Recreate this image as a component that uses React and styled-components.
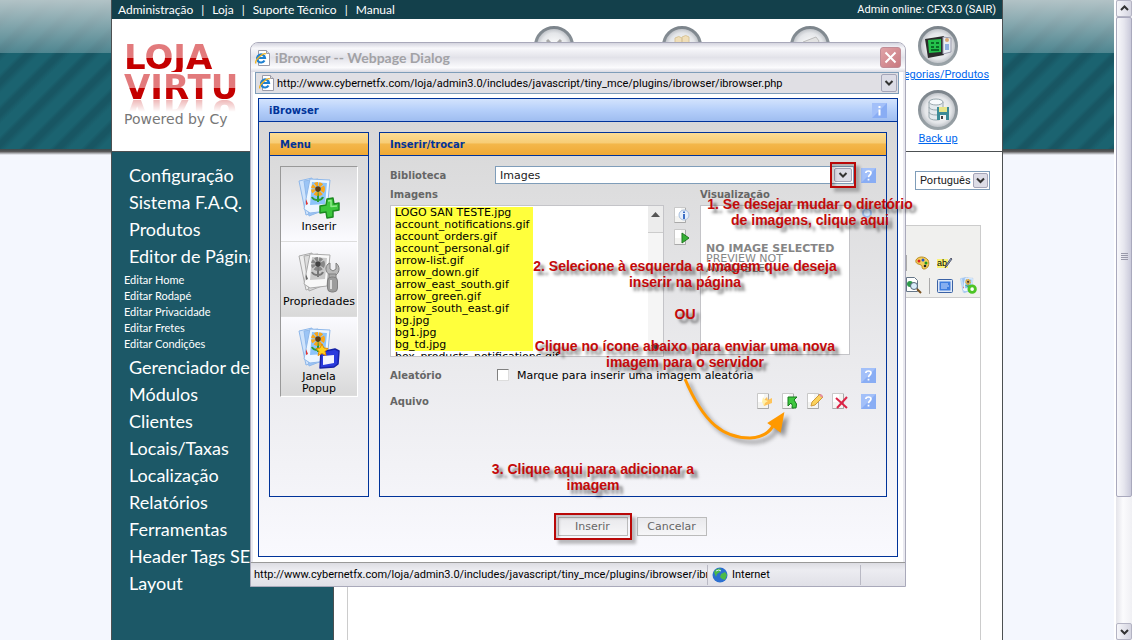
import React from 'react';
import styled, { createGlobalStyle, css } from 'styled-components';

const trebuchet = '"Trebuchet MS", Lato, sans-serif';
const tahoma = 'Tahoma, Roboto, sans-serif';
const verdana = 'Verdana, "DejaVu Sans", sans-serif';

const GlobalStyle = createGlobalStyle`
  * {
    box-sizing: border-box;
  }

  body {
    margin: 0;
    overflow: hidden;
    font-family: ${tahoma};
    font-size: 11px;
    color: #000;
  }

  ul, p, h1, h2, h3 {
    margin: 0;
    padding: 0;
    list-style: none;
  }

  button, select, input {
    font: inherit;
    margin: 0;
  }

  svg {
    display: block;
  }
`;

const Window = styled.div`
  display: flex;
  height: 100vh;
  position: relative;
`;

const Page = styled.div`
  flex: 1;
  overflow: hidden;
  background:
    linear-gradient(rgba(186, 200, 203, .95), rgba(130, 168, 176, .5)) 0 0 / 100% 53px no-repeat,
    linear-gradient(#3f4a4d, #555 40%, #f4f7fe) 0 149px / 100% 6px no-repeat,
    linear-gradient(#f4f7fe, #f4f7fe) 0 155px / 100% 100% no-repeat,
    repeating-linear-gradient(135deg, #1b6370 0 8px, #185663 12px 16px, #1b6370 22px);
`;

const Shell = styled.div`
  max-width: 892px;
  min-height: 100%;
  margin: 0 auto;
  display: flex;
  flex-direction: column;
  background: #fff;
  border: solid #4c5052;
  border-width: 0 1px;
`;

const TopBar = styled.header`
  display: flex;
  justify-content: space-between;
  align-items: center;
  height: 19px;
  padding: 0 6px;
  background: #13404b;
  color: #fff;
`;

const TopNav = styled.nav`
  display: flex;
  gap: 8px;
  font: 12px ${trebuchet};

  a {
    color: #fff;
    text-decoration: none;
  }
`;

const Banner = styled.div`
  display: flex;
  justify-content: space-between;
  height: 133px;
  border-bottom: 1px solid #4c5052;
`;

const Brand = styled.div`
  padding: 23px 0 0 12px;
`;

const BrandWord = styled.div`
  height: 30px;
  font: bold 34px/30px "DejaVu Sans", sans-serif;
  color: transparent;
  background: linear-gradient(#e27a7c 52%, #c40000 52%);
  background-clip: text;
  -webkit-box-reflect: ${p => p.$mirror ? 'below -5px linear-gradient(transparent 50%, rgba(0, 0, 0, .35))' : 'none'};
`;

const BrandNote = styled.p`
  margin-top: 9px;
  font: 14px/16px "DejaVu Sans", sans-serif;
  color: #777;
`;

const Shortcuts = styled.div`
  display: grid;
  grid-template-columns: repeat(4, 128px);
  grid-template-rows: 64px 64px;
  justify-items: center;
  padding-top: 6px;
`;

const Shortcut = styled.a`
  grid-column: ${p => p.$col};
  display: flex;
  flex-direction: column;
  align-items: center;
  font: 11px/15px ${tahoma};
  color: #06e;
`;

const Columns = styled.div`
  flex: 1;
  display: flex;
`;

const Sidebar = styled.nav`
  flex: 0 0 222px;
  padding: 10px 0 0 12px;
  background: #1c5867;
  border-right: 1px solid #4c5052;

  a {
    display: block;
    color: #fff;
    text-decoration: none;
    white-space: nowrap;
  }
`;

const SideLink = styled.a`
  padding-left: 5px;
  font: 18px/27px ${trebuchet};
`;

const SideSubLink = styled.a`
  font: 11px/16px ${trebuchet};
`;

const SideGroup = styled.div`
  padding: 2px 0;
`;

const Main = styled.main`
  flex: 1;
  display: flex;
  flex-direction: column;
  padding: 19px 12px 0 13px;
`;

const SelectBox = styled.div`
  position: relative;
  display: flex;
  border: 1px solid #7f9db9;
  background: #fff;

  select {
    flex: 1;
    width: 100%;
    height: 17px;
    padding: 0 16px 0 4px;
    border: 0;
    outline: 0;
    appearance: none;
    background: transparent;
    color: #222;
  }

  svg {
    position: absolute;
    right: 1px;
    top: 1px;
    pointer-events: none;
  }
`;

const LanguageSelect = styled(SelectBox)`
  align-self: flex-end;
  width: 75px;
`;

const Editor = styled.section`
  flex: 1;
  margin: 35px 9px 0 0;
  border: solid #ccc;
  border-width: 1px 1px 0;
`;

const Toolbar = styled.div`
  height: 72px;
  padding-top: 25px;
  background: #f0f0ee;
  border-bottom: 1px solid #ccc;
`;

const ToolRow = styled.div`
  display: flex;
  justify-content: flex-end;
  align-items: center;
  gap: 7px;
  height: 23px;
  padding-right: ${p => p.$end}px;
`;

const Rule = styled.span`
  width: 1px;
  height: 16px;
  background: #aaa;
`;

const Scrollbar = styled.div`
  flex: 0 0 18px;
  display: flex;
  flex-direction: column;
  padding-left: 2px;
  background: linear-gradient(90deg, #fff 2px, #e4e4ea 2px, #fbfbfd 9px, #f0f0f4);
`;

const ScrollEnd = styled.button`
  height: 17px;
  padding: 0 0 0 3px;
  border: 1px solid #b4b4c4;
  border-radius: 2px;
  background: linear-gradient(90deg, #f6f6fa, #d4d4e0);
`;

const ScrollThumb = styled.div`
  flex: 19;
  display: flex;
  align-items: center;
  justify-content: center;
  border: 1px solid #a9a9bd;
  border-radius: 2px;
  background: linear-gradient(90deg, #f8f8fb, #e6e6ee 50%, #c9c9da);
`;

const ScrollSpace = styled.div`
  flex: 5;
`;

const Dialog = styled.section`
  position: absolute;
  left: 250px;
  top: 42px;
  width: 656px;
  border: 1px solid #a9a9ba;
  border-radius: 8px 8px 0 0;
  background: #fff;
  box-shadow: inset 0 0 0 2px #e9e9f0;
`;

const TitleBar = styled.div`
  display: flex;
  align-items: center;
  gap: 4px;
  height: 29px;
  padding: 0 4px;
  border-radius: 7px 7px 0 0;
  background: linear-gradient(#d4d4de, #f8f8fb 18%, #e2e2e9 50%, #fbfbfd 85%, #d9d9e2);

  h1 {
    flex: 1;
    font: bold 14px ${trebuchet};
    color: #a2a2a6;
  }
`;

const CloseButton = styled.button`
  width: 21px;
  height: 21px;
  padding: 0;
  border: 1px solid #c08c96;
  border-radius: 3px;
  background: linear-gradient(135deg, #e0a4a8, #c9797f);
`;

const AddressBar = styled.div`
  display: flex;
  align-items: center;
  height: 22px;
  margin: 0 6px 0 4px;
  padding: 1px 1px 1px 3px;
  border: 1px solid #7f9db9;
  background: #e0dfe4;

  input {
    flex: 1;
    margin-left: 2px;
    padding: 0;
    border: 0;
    outline: 0;
    background: transparent;
    font: 11px ${tahoma};
    color: #000;
  }
`;

const Frame = styled.div`
  margin: 4px 7px 5px;
  border: 1px solid #039;
  background: linear-gradient(#d6d6d6, #e4e4e6 40%, #f9f9fe);
`;

const panelTitle = css`
  display: flex;
  align-items: center;
  justify-content: space-between;
  height: 23px;
  padding: 0 10px;
  border-bottom: 1px solid #039;
  font: bold 10px ${verdana};
  color: #039;
`;

const FrameTitle = styled.h2`
  ${panelTitle}
  background: linear-gradient(#d3e3fd, #b5cffa 50%, #9fbdf0);
`;

const PanelTitle = styled.h3`
  ${panelTitle}
  background: linear-gradient(#fbdc93, #f7cd76 45%, #f3b74b 50%, #f0a935);
`;

const Panels = styled.div`
  display: flex;
  align-items: stretch;
  gap: 10px;
  min-height: 375px;
  padding: 10px 10px 0;
`;

const Panel = styled.div`
  flex: ${p => p.$width ? `0 0 ${p.$width}px` : 1};
  border: 1px solid #039;
`;

const MenuList = styled.div`
  display: flex;
  flex-direction: column;
  margin: 10px;
  border: 1px solid #999;
  border-right-color: #fff;
  border-bottom-color: #fff;
`;

const MenuButton = styled.button`
  display: flex;
  flex-direction: column;
  align-items: center;
  gap: 2px;
  min-height: 75px;
  padding: 10px 0 0;
  border: 0;
  border-bottom: 1px solid #ddd;
  background: ${p => p.$pressed
    ? 'linear-gradient(#dcdcde, #fbfbff)'
    : 'linear-gradient(#fbfbff, #d9d9d9)'};
  font: 11px/12px ${verdana};
`;

const Form = styled.div`
  padding: 10px 10px 0;
  font: bold 10px ${verdana};
  color: #666;
`;

const Row = styled.div`
  display: grid;
  grid-template-columns: 105px 1fr 22px;
  align-items: center;
  height: 18px;
  margin-bottom: 8px;

  & > :last-child {
    justify-self: end;
  }
`;

const LibraryRow = styled(Row)`
  margin-bottom: 4px;
`;

const LibrarySelect = styled(SelectBox)`
  font: 11px ${verdana};

  select {
    height: 16px;
  }
`;

const Browser = styled.div`
  display: grid;
  grid-template-columns: 274px 16px 150px 1fr;
  column-gap: 10px;
  margin-bottom: 9px;

  h4 {
    margin: 0;
    height: 17px;
    font: bold 10px/14px ${verdana};
  }
`;

const FileBox = styled.div`
  display: flex;
  height: 152px;
  border: 1px solid #c4c4c8;
  background: #fff;
  font: 11px/12px ${verdana};
  color: #000;
`;

const FileList = styled.ul`
  flex: 1;
  overflow: hidden;
  padding: 1px 0 0 4px;
  white-space: nowrap;
`;

const File = styled.li`
  width: 138px;
  background: ${p => p.$marked ? '#ffff3c' : 'transparent'};
`;

const FileScroll = styled.div`
  display: flex;
  flex-direction: column;
  justify-content: space-between;
  width: 15px;
  background: #f5f5f5;

  div {
    height: 27px;
    background: #ececec;
    border-bottom: 1px solid #ccc;
  }

  svg {
    margin: 4px 3px;
  }
`;

const Tools = styled.div`
  display: flex;
  flex-direction: column;
  gap: 6px;
  padding-top: 2px;
  align-items: ${p => p.$end ? 'flex-end' : 'flex-start'};
`;

const IconButton = styled.button`
  padding: 0;
  border: 0;
  background: none;
`;

const Preview = styled.div`
  height: 150px;
  padding: 38px 0 0 5px;
  border: 1px solid #c4c4c8;
  background: #fff;
  font: 11px/10px ${verdana};
  color: #858585;
  white-space: nowrap;
`;

const CheckLabel = styled.label`
  display: flex;
  align-items: center;
  gap: 8px;
  padding-left: 2px;
  font: 11px ${verdana};
  color: #000;

  input {
    width: 12px;
    height: 12px;
    appearance: none;
    border: 1px solid #808080;
    border-right-color: #ddd;
    border-bottom-color: #ddd;
    background: #fff;
  }
`;

const FileActions = styled.div`
  display: flex;
  justify-content: flex-end;
  gap: 9px;
  padding-right: 6px;
`;

const Footer = styled.div`
  display: flex;
  justify-content: center;
  gap: 9px;
  padding: 20px 0 20px 108px;
`;

const FormButton = styled.button`
  width: 70px;
  height: 19px;
  padding: 0;
  border: 1px solid #bbb;
  background: linear-gradient(#e9e9ec, #f6f6f8);
  font: 11px ${verdana};
  color: #666;
`;

const StatusBar = styled.div`
  display: flex;
  align-items: center;
  height: 24px;
  padding: 0 3px;
  border-top: 1px solid #999;
  background: linear-gradient(#dcdce2, #ececf1 30%, #e0e0e7);
  font: 11px ${tahoma};

  p {
    flex: 1;
    overflow: hidden;
    white-space: nowrap;
  }
`;

const Zone = styled.div`
  display: flex;
  align-items: center;
  gap: 4px;
  width: 154px;
  height: 20px;
  padding-left: 4px;
  border: solid #b9b9c4;
  border-width: 0 1px;
`;

const StatusEnd = styled.div`
  width: 41px;
`;

const Marked = styled.div`
  position: relative;
  display: grid;
`;

const Ring = styled.span`
  position: absolute;
  right: ${p => p.$x}px;
  top: -4px;
  width: ${p => p.$w}px;
  height: ${p => p.$h}px;
  border: 2px solid #b90808;
  box-shadow: 4px 4px 3px rgba(0, 0, 0, .25), inset 3px 3px 3px rgba(0, 0, 0, .2);
  pointer-events: none;
`;

const Callout = styled.p`
  position: absolute;
  left: ${p => p.$left}px;
  top: ${p => p.$top}px;
  width: 320px;
  font: bold 14px/16px Arial, "Liberation Sans", sans-serif;
  text-align: center;
  color: #c40a0a;
  text-shadow: 4px 4px 3px rgba(0, 0, 0, .5);
  pointer-events: none;
`;

const CalloutArrow = styled.svg`
  position: absolute;
  left: 429px;
  top: 333px;
  filter: drop-shadow(4px 4px 2px rgba(0, 0, 0, .4));
  pointer-events: none;
`;

const Chevron = ({ width = 15, height = 15 }) => (
  <svg width={width} height={height} viewBox={`0 0 ${width} ${height}`}>
    <rect x=".5" y=".5" width={width - 1} height={height - 1} rx="1.5" fill="#dcdce6" stroke="#a5a5b8" />
    <path d={`M${width / 2 - 3.5} ${height / 2 - 2}l3.500 3.500 3.500-3.500`} fill="none" stroke="#333" strokeWidth="2" />
  </svg>
);

const HelpIcon = ({ mark = '?' }) => (
  <svg width="15" height="15" viewBox="0 0 15 15">
    <rect width="15" height="15" fill="#89adf4" />
    <path d="M0 15L15 0H0z" fill="#a3c0f9" />
    {mark === '?'
      ? <path d="M4.800 5C4.800 2.300 10 2.300 10 5C10 7 7.500 7 7.500 9.300M7.500 10.800v1.700" fill="none" stroke="#fff" strokeWidth="1.700" />
      : <path d="M7.500 3v2M7.500 6.500v6" fill="none" stroke="#fff" strokeWidth="2" />}
  </svg>
);

const BrowserIcon = () => (
  <svg width="16" height="16" viewBox="0 0 16 16">
    <path d="M3.500.5h8l3 3v12h-11z" fill="#fff" stroke="#9a9aa8" />
    <path d="M11.500.5v3h3" fill="#ddd" stroke="#9a9aa8" />
    <path d="M9.500 10.500A4 4 0 1 1 10 8H3" fill="none" stroke="#1d7fd0" strokeWidth="2.200" />
    <path d="M1 13.500C-1 10 9 2 11 4" fill="none" stroke="#efb325" strokeWidth="1.400" />
  </svg>
);

const GlobeIcon = () => (
  <svg width="16" height="16" viewBox="0 0 16 16">
    <circle cx="8" cy="8" r="7.500" fill="#2c6fd0" />
    <path d="M2 5c2-4 6-4 7-3l-1 3-3 2-1 3zM9 7l4-2 2 3-2 5-3-1-2-2z" fill="#4dbb48" />
    <path d="M4 4q3-2 5 0" fill="none" stroke="#d7efff" />
  </svg>
);

const Photo = ({ gray }) => (
  <g stroke={gray ? '#aaa' : '#8fb8ea'}>
    <path d="M1 4l13-3 5 33-11 4z" fill={gray ? '#eee' : '#cfe3fb'} />
    <path d="M6 4l14-2 4 32-13 5z" fill={gray ? '#ddd' : '#9cc5f6'} />
    <path d="M12 2l20 1-3 31-17 2-6-4z" fill={gray ? '#f8f8f8' : '#edf6ff'} />
    <path d="M14 5l15 1-2 21-15 1z" fill={gray ? '#c9c9c9' : '#8cc4fa'} stroke="none" />
    <path d="M20 13v12M20 23q-5 0-6-3M20 23q4 0 5-3" fill="none" stroke={gray ? '#777' : '#2a9b35'} strokeWidth="2" />
    <circle cx="20" cy="12" r="5" fill="none" stroke={gray ? '#888' : '#f9a61a'} strokeWidth="4" strokeDasharray="3 1" />
    <circle cx="20" cy="12" r="2.800" fill={gray ? '#444' : '#5b3a16'} stroke="none" />
    <path d="M8 22l2 5-2 1z" fill={gray ? '#666' : '#d33'} stroke="none" />
  </g>
);

const MenuIcon = ({ kind }) => (
  <svg width="42" height="42" viewBox="0 0 42 42">
    <Photo gray={kind === 'props'} />
    {kind === 'insert' && (
      <g strokeLinejoin="round">
        <path d="M29 22l6-1 1 6 5-1v7l-6 1v6l-6 1-1-6-6 1v-7l6-1z" fill="#3cc63c" stroke="#1b8a20" strokeWidth="1.500" />
        <path d="M30 24l3-.500v6l6-.500" fill="none" stroke="#90ec8a" strokeWidth="1.500" />
      </g>
    )}
    {kind === 'props' && (
      <g>
        <path d="M30 12l2-1v6l3 2 3-2v-6c4 3 4 9 0 12h-6c-5-3-5-8-2-11z" fill="#b9b9b9" stroke="#808080" />
        <path d="M31 22h7v4h-7z" fill="#aaa" stroke="#808080" />
        <rect x="29.500" y="25" width="10" height="15" rx="4" fill="#9c9c9c" stroke="#808080" />
        <path d="M33 28v9" stroke="#ddd" strokeWidth="2" />
      </g>
    )}
    {kind === 'popup' && (
      <g strokeLinejoin="round">
        <path d="M23 25l14-3 4 2-1 13-4 3-14 1z" fill="#2a3bdc" stroke="#1622a6" strokeWidth="1.500" />
        <path d="M25 29l11-1v8l-11 2z" fill="#f2f4ff" />
        <path d="M24 17l2 4 4 .5-3 3 1 4-4-2-4 2 1-4-3-3 4-.5z" fill="#ffd21f" stroke="#e58a00" />
      </g>
    )}
  </svg>
);

const Sheet = ({ children, label }) => (
  <IconButton aria-label={label}>
    <svg width="16" height="16" viewBox="0 0 16 16">
      <path d="M.5.500h11v15H.5z" fill="#f4f4f2" stroke="#c9c9c9" />
      <path d="M1 1h6v8H1z" fill="#fff" />
      <path d="M.5 15.500h11V1" fill="none" stroke="#a9a9a9" />
      {children}
    </svg>
  </IconButton>
);

const RoundIcon = ({ kind }) => (
  <svg width="42" height="42" viewBox="0 0 42 42">
    <defs>
      <linearGradient id="rim" x1="0" y1="0" x2="0" y2="1">
        <stop offset="0" stopColor="#7d858c" />
        <stop offset="1" stopColor="#9aa3a8" />
      </linearGradient>
      <radialGradient id="dish" cx=".5" cy=".5">
        <stop offset="0" stopColor="#fff" />
        <stop offset=".7" stopColor="#e4e6e9" />
        <stop offset="1" stopColor="#b4b8be" />
      </radialGradient>
    </defs>
    <circle cx="21" cy="21" r="18.500" fill="url(#dish)" stroke="url(#rim)" strokeWidth="3" />
    {kind === 'tools' && <path d="M14 15l14 14M28 15L16 27" stroke="#a9a9a9" strokeWidth="3" />}
    {kind === 'users' && <path d="M14 13q4-3 7 0v9h-7zM21 12q4-3 7 0v10h-7z" fill="#f0deb8" stroke="#d8c59a" />}
    {kind === 'box' && <path d="M14 17l13-5 3 4-4 8H15z" fill="#e2e2e2" stroke="#bbb" />}
    {kind === 'products' && (
      <g>
        <path d="M8 14l19-3v19l-16 3z" fill="#2b2b2b" />
        <path d="M11 15l13-1v13l-12 1z" fill="#24c04b" />
        <path d="M14 18h3m2 0h3M14 22h3m2 0h3M14 25h8" stroke="#0a6b26" strokeWidth="2" />
        <path d="M26 12l8 1v14l-8 2z" fill="#e9eef4" stroke="#99a" />
        <circle cx="30" cy="15" r="2" fill="#dba774" />
        <path d="M28 19h4v6h-4z" fill="#8faee0" />
      </g>
    )}
    {kind === 'backup' && (
      <g>
        <path d="M12 13v15c0 4 14 4 14 0V13z" fill="#e4eaee" stroke="#9aa8ae" />
        <ellipse cx="19" cy="13" rx="7" ry="3" fill="#f7fafc" stroke="#9aa8ae" />
        <path d="M12 18c0 4 14 4 14 0M12 23c0 4 14 4 14 0" fill="none" stroke="#9aa8ae" />
        <rect x="20" y="18" width="12" height="13" fill="#3d8b97" />
        <rect x="22" y="18" width="8" height="5" fill="#e8e58a" />
        <rect x="23" y="26" width="6" height="5" fill="#f4f4f4" />
        <path d="M24 27h2v3h-2z" fill="#444" />
      </g>
    )}
  </svg>
);

const files = [
  'LOGO SAN TESTE.jpg', 'account_notifications.gif', 'account_orders.gif', 'account_personal.gif',
  'arrow-list.gif', 'arrow_down.gif', 'arrow_east_south.gif', 'arrow_green.gif',
  'arrow_south_east.gif', 'bg.jpg', 'bg1.jpg', 'bg_td.jpg',
];

const topLinks = ['Administração', 'Loja', 'Suporte Técnico', 'Manual'];
const mainLinks = ['Configuração', 'Sistema F.A.Q.', 'Produtos', 'Editor de Páginas'];
const pageLinks = ['Editar Home', 'Editar Rodapé', 'Editar Privacidade', 'Editar Fretes', 'Editar Condições'];
const moreLinks = [
  'Gerenciador de', 'Módulos', 'Clientes', 'Locais/Taxas', 'Localização',
  'Relatórios', 'Ferramentas', 'Header Tags SEO', 'Layout',
];

const address = 'http://www.cybernetfx.com/loja/admin3.0/includes/javascript/tiny_mce/plugins/ibrowser/ibrowser.php';

const AdminPage = () => (
  <Page>
    <Shell>
      <TopBar>
        <TopNav>
          {topLinks.map((name, i) => (
            <React.Fragment key={name}>
              {i > 0 && <span>|</span>}
              <a href="#top">{name}</a>
            </React.Fragment>
          ))}
        </TopNav>
        <span>Admin online: CFX3.0 (SAIR)</span>
      </TopBar>
      <Banner>
        <Brand>
          <BrandWord>LOJA</BrandWord>
          <BrandWord $mirror>VIRTU</BrandWord>
          <BrandNote>Powered by Cy</BrandNote>
        </Brand>
        <Shortcuts>
          <Shortcut $col={1} href="#tools" aria-label="Ferramentas"><RoundIcon kind="tools" /></Shortcut>
          <Shortcut $col={2} href="#users" aria-label="Clientes"><RoundIcon kind="users" /></Shortcut>
          <Shortcut $col={3} href="#orders" aria-label="Pedidos"><RoundIcon kind="box" /></Shortcut>
          <Shortcut $col={4} href="#products"><RoundIcon kind="products" />Categorias/Produtos</Shortcut>
          <Shortcut $col={4} href="#backup"><RoundIcon kind="backup" />Back up</Shortcut>
        </Shortcuts>
      </Banner>
      <Columns>
        <Sidebar>
          {mainLinks.map(name => <SideLink key={name} href="#menu">{name}</SideLink>)}
          <SideGroup>
            {pageLinks.map(name => <SideSubLink key={name} href="#page">{name}</SideSubLink>)}
          </SideGroup>
          {moreLinks.map(name => <SideLink key={name} href="#menu">{name}</SideLink>)}
        </Sidebar>
        <Main>
          <LanguageSelect>
            <select aria-label="Idioma"><option>Português</option></select>
            <Chevron />
          </LanguageSelect>
          <Editor>
            <Toolbar>
              <ToolRow $end={26}>
                <Rule />
                <IconButton aria-label="Cor">
                  <svg width="16" height="16" viewBox="0 0 16 16">
                    <path d="M2 5c2-4 9-4 12 0 2 4 0 9-4 9-3 0-1-3-3-4S1 9 2 5z" fill="#f3cf5b" stroke="#b98b1f" />
                    <circle cx="5" cy="6" r="1.500" fill="#d22" />
                    <circle cx="9" cy="5" r="1.500" fill="#25c" />
                    <circle cx="12" cy="8" r="1.500" fill="#292" />
                    <circle cx="11" cy="11" r="1.300" fill="#222" />
                  </svg>
                </IconButton>
                <IconButton aria-label="Realce">
                  <svg width="17" height="16" viewBox="0 0 17 16">
                    <rect y="4" width="11" height="9" fill="#fbf374" />
                    <text x="0" y="11" fontSize="9" fontFamily="Liberation Sans" fill="#000">ab</text>
                    <path d="M15 4l-5 7-2 2 1-3 5-7z" fill="#8aa6cc" stroke="#445" strokeWidth=".8" />
                  </svg>
                </IconButton>
              </ToolRow>
              <ToolRow $end={3}>
                <IconButton aria-label="Visualizar">
                  <svg width="17" height="17" viewBox="0 0 17 17">
                    <path d="M1.500.5h8l3 3v11h-11z" fill="#fff" stroke="#678" />
                    <circle cx="5" cy="7" r="3" fill="#2d9b4a" />
                    <circle cx="9" cy="9" r="3.500" fill="#d9ecfa" stroke="#567" />
                    <path d="M12 12l4 4" stroke="#7b5220" strokeWidth="2" />
                  </svg>
                </IconButton>
                <Rule />
                <IconButton aria-label="Tela cheia">
                  <svg width="16" height="16" viewBox="0 0 16 16">
                    <rect x=".5" y="1.500" width="15" height="13" rx="1" fill="#dfe9f7" stroke="#3b62a5" />
                    <rect x="2.500" y="3.500" width="11" height="9" fill="#3f7de0" />
                    <path d="M4 6h7M4 8h8M4 10h6" stroke="#cfe0ff" />
                  </svg>
                </IconButton>
                <IconButton aria-label="Imagem">
                  <svg width="17" height="17" viewBox="0 0 42 42">
                    <Photo />
                    <circle cx="30" cy="30" r="8" fill="#fff" stroke="#4cc424" strokeWidth="7" />
                  </svg>
                </IconButton>
              </ToolRow>
            </Toolbar>
          </Editor>
        </Main>
      </Columns>
    </Shell>
  </Page>
);

const ImageDialog = () => (
  <Dialog role="dialog" aria-label="iBrowser">
    <TitleBar>
      <BrowserIcon />
      <h1>iBrowser -- Webpage Dialog</h1>
      <CloseButton aria-label="Fechar">
        <svg width="19" height="19" viewBox="0 0 19 19">
          <path d="M4.500 4.500l10 10M14.500 4.500l-10 10" stroke="#fff" strokeWidth="2" />
        </svg>
      </CloseButton>
    </TitleBar>
    <AddressBar>
      <BrowserIcon />
      <input aria-label="Endereço" defaultValue={address} />
      <Chevron width={16} height={18} />
    </AddressBar>
    <Frame>
      <FrameTitle>iBrowser <HelpIcon mark="i" /></FrameTitle>
      <Panels>
        <Panel $width={100}>
          <PanelTitle>Menu</PanelTitle>
          <MenuList>
            <MenuButton $pressed><MenuIcon kind="insert" />Inserir</MenuButton>
            <MenuButton><MenuIcon kind="props" />Propriedades</MenuButton>
            <MenuButton><MenuIcon kind="popup" /><span>Janela<br />Popup</span></MenuButton>
          </MenuList>
        </Panel>
        <Panel>
          <PanelTitle>Inserir/trocar</PanelTitle>
          <Form>
            <LibraryRow>
              <label htmlFor="library">Biblioteca</label>
              <Marked>
                <LibrarySelect>
                  <select id="library"><option>Images</option></select>
                  <Chevron width={18} height={14} />
                </LibrarySelect>
                <Ring $x={-2} $w={26} $h={26} />
              </Marked>
              <HelpIcon />
            </LibraryRow>
            <Browser>
              <h4>Imagens</h4>
              <span />
              <h4>Visualização</h4>
              <span />
              <FileBox>
                <FileList>
                  {files.map(name => <File key={name} $marked>{name}</File>)}
                  <File>box_products_notifications.gif</File>
                </FileList>
                <FileScroll>
                  <div>
                    <svg width="9" height="9" viewBox="0 0 9 9"><path d="M0 7l4.500-5L9 7z" fill="#555" /></svg>
                  </div>
                  <svg width="9" height="9" viewBox="0 0 9 9"><path d="M0 2l4.500 5L9 2z" fill="#555" /></svg>
                </FileScroll>
              </FileBox>
              <Tools>
                <Sheet label="Informações">
                  <circle cx="10" cy="8" r="5" fill="#e5effb" stroke="#a8bfdd" />
                  <path d="M10 4.500v1.500M10 7v5" stroke="#2a62c0" strokeWidth="1.800" />
                </Sheet>
                <Sheet label="Visualizar">
                  <path d="M8 4l7 5-7 5z" fill="#35b135" stroke="#217a21" />
                </Sheet>
              </Tools>
              <Preview>
                <strong>NO IMAGE SELECTED</strong><br />
                PREVIEW NOT<br />
                AVAILABLE!
              </Preview>
              <Tools $end>
                <IconButton aria-label="Ampliar">
                  <svg width="16" height="16" viewBox="0 0 16 16">
                    <circle cx="7" cy="6" r="4" fill="#d6eaff" stroke="#9dbdec" strokeWidth="2" />
                    <path d="M10 9l4 4" stroke="#e0b984" strokeWidth="2" />
                  </svg>
                </IconButton>
              </Tools>
            </Browser>
            <Row>
              <span>Aleatório</span>
              <CheckLabel><input type="checkbox" />Marque para inserir uma imagem aleatória</CheckLabel>
              <HelpIcon />
            </Row>
            <Row>
              <span>Aquivo</span>
              <FileActions>
                <Sheet label="Nova pasta">
                  <path d="M6 8l4-4 1 3 4-2v5l-8 3z" fill="#ffc45a" />
                  <path d="M6 4l2 3 3 1-3 2-1 3-2-4z" fill="#fff0a8" />
                </Sheet>
                <Sheet label="Enviar">
                  <path d="M6 4h9l-3 3q4 4 2 8h-4q1-3-1-5l-3 3z" fill="#3fc83f" stroke="#167a1d" />
                </Sheet>
                <Sheet label="Renomear">
                  <path d="M4 13l1-4 8-8 3 3-8 8z" fill="#fbd25c" stroke="#d09a3a" />
                  <path d="M12 2l3 3 1-2-2-2z" fill="#e58fa0" />
                </Sheet>
                <Sheet label="Excluir">
                  <path d="M4 5l11 10M15 4L5 15" stroke="#dc2446" strokeWidth="2" />
                </Sheet>
              </FileActions>
              <HelpIcon />
            </Row>
          </Form>
        </Panel>
      </Panels>
      <Footer>
        <Marked>
          <FormButton>Inserir</FormButton>
          <Ring $x={-4} $w={78} $h={27} />
        </Marked>
        <FormButton>Cancelar</FormButton>
      </Footer>
    </Frame>
    <StatusBar>
      <p>{address}</p>
      <Zone><GlobeIcon />Internet</Zone>
      <StatusEnd />
    </StatusBar>

    <Callout $left={399} $top={153}>
      1. Se desejar mudar o diretório<br />de imagens, clique aqui
    </Callout>
    <Callout $left={274} $top={215}>
      2. Selecione à esquerda a imagem que deseja<br />inserir na página<br /><br />
      OU<br /><br />
      Clique no ícone abaixo para enviar uma nova<br />imagem para o servidor
    </Callout>
    <Callout $left={182} $top={418}>
      3. Clique aqui para adicionar a<br />imagem
    </Callout>
    <CalloutArrow width="110" height="70" viewBox="0 0 110 70">
      <path d="M5 3C24 48 44 62 70 62Q88 61 94 48" fill="none" stroke="#f90" strokeWidth="3" />
      <path d="M103 38l-14 9 11 8z" fill="#f90" stroke="#f90" strokeWidth="2" />
    </CalloutArrow>
  </Dialog>
);

const App = () => (
  <>
    <GlobalStyle />
    <Window>
      <AdminPage />
      <Scrollbar>
        <ScrollEnd aria-label="Subir">
          <svg width="9" height="9" viewBox="0 0 9 9"><path d="M1 6l3.500-3.500L8 6" fill="none" stroke="#333" strokeWidth="2" /></svg>
        </ScrollEnd>
        <ScrollThumb>
          <svg width="7" height="8" viewBox="0 0 7 8"><path d="M0 .5h7M0 2.500h7M0 4.500h7M0 6.500h7" stroke="#99a" /></svg>
        </ScrollThumb>
        <ScrollSpace />
        <ScrollEnd aria-label="Descer">
          <svg width="9" height="9" viewBox="0 0 9 9"><path d="M1 3l3.500 3.500L8 3" fill="none" stroke="#333" strokeWidth="2" /></svg>
        </ScrollEnd>
      </Scrollbar>
      <ImageDialog />
    </Window>
  </>
);

export default App;
